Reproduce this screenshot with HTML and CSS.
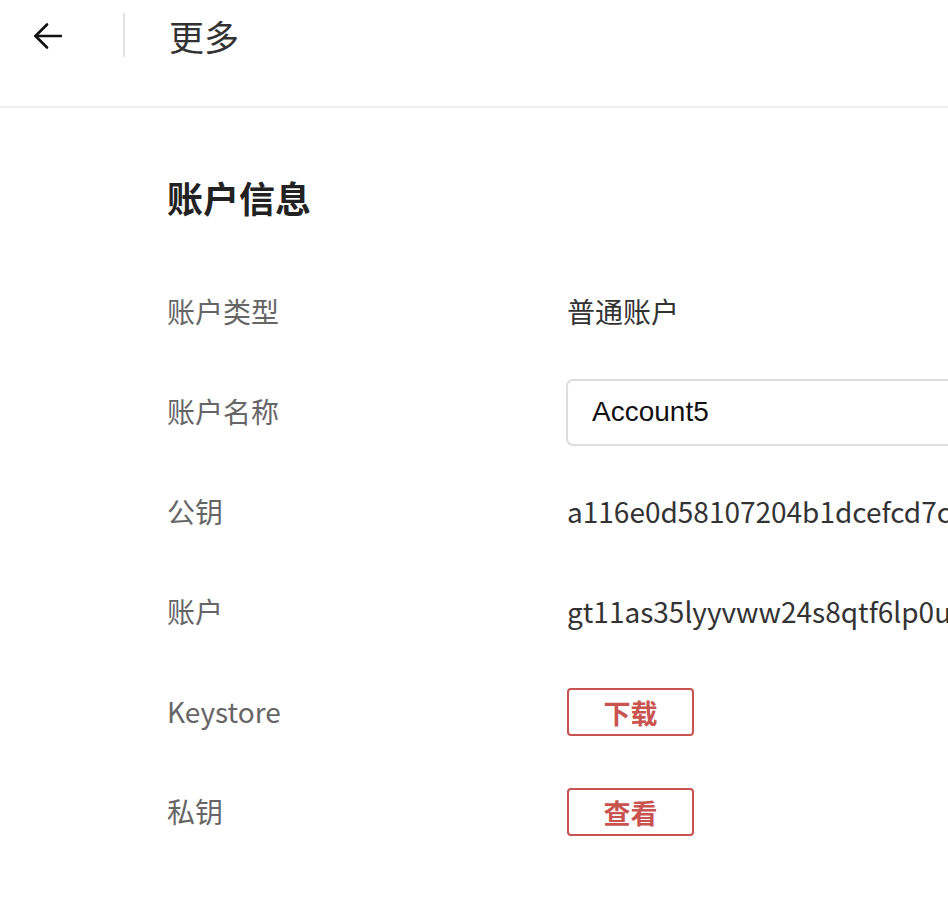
FILE: index.html
```html
<!DOCTYPE html>
<html lang="zh-CN">
<head>
<meta charset="utf-8">
<title>更多</title>
<link rel="stylesheet" href="styles.css">
</head>
<body>
<header class="topbar">
  <div class="topbar-row">
    <button class="back" aria-label="返回">
      <svg width="28" height="26" viewBox="0 0 28 26" fill="none" stroke="#111" stroke-width="2.6" stroke-linecap="round" stroke-linejoin="round">
        <path d="M1.5 13H27"/>
        <path d="M13 1.5L1.5 13L13 24.5"/>
      </svg>
    </button>
    <span class="divider"></span>
    <h1 class="page-title">更多</h1>
  </div>
</header>
<main class="content">
  <h2 class="section-title">账户信息</h2>
  <div class="rows">
    <div class="row">
      <div class="label">账户类型</div>
      <div class="value">普通账户</div>
    </div>
    <div class="row">
      <div class="label">账户名称</div>
      <div class="value"><input class="name-input" type="text" value="Account5"></div>
    </div>
    <div class="row">
      <div class="label">公钥</div>
      <div class="value mono">a116e0d58107204b1dcefcd7c0a3f5e8b2d4c6a1f9e7d3b5c8a2e4f6d0b1c3</div>
    </div>
    <div class="row">
      <div class="label">账户</div>
      <div class="value mono">gt11as35lyyvww24s8qtf6lp0ulx9k3m2n</div>
    </div>
    <div class="row">
      <div class="label">Keystore</div>
      <div class="value"><button class="btn-outline">下载</button></div>
    </div>
    <div class="row">
      <div class="label">私钥</div>
      <div class="value"><button class="btn-outline">查看</button></div>
    </div>
  </div>
</main>
</body>
</html>
```

FILE: styles.css
```css
html, body {
  margin: 0;
  padding: 0;
  background: #fff;
  overflow: hidden;
}
body {
  width: 948px;
  height: 908px;
  font-family: "Noto Sans CJK SC", "Noto Sans", sans-serif;
  color: #333;
}
.topbar {
  height: 106px;
  border-bottom: 2px solid #eeeeee;
  box-sizing: content-box;
}
.topbar-row {
  height: 70px;
  display: flex;
  align-items: center;
  padding-left: 34px;
}
.back {
  border: 0;
  background: none;
  padding: 0;
  width: 28px;
  height: 26px;
  display: flex;
  margin-top: 1px;
}
.divider {
  width: 2px;
  height: 44px;
  background: #e2e2e2;
  margin-left: 61px;
}
.page-title {
  margin: 0 0 0 44px;
  font-size: 35px;
  font-weight: 400;
  color: #333;
  line-height: 1;
}
.content {
  padding-left: 167px;
}
.section-title {
  margin: 0;
  padding-top: 69px;
  height: 85px;
  box-sizing: content-box;
  font-size: 36px;
  font-weight: 700;
  color: #222;
  line-height: 40px;
}
.rows {
  display: flex;
  flex-direction: column;
}
.row {
  height: 100px;
  display: flex;
  align-items: center;
}
.label {
  width: 400px;
  flex: none;
  font-size: 28px;
  color: #666;
  margin-top: -3px;
}
.value {
  font-size: 28px;
  color: #333;
  white-space: nowrap;
  margin-top: -3px;
}
.name-input {
  width: 600px;
  height: 67px;
  box-sizing: border-box;
  margin-left: -1px;
  margin-top: 3px;
  border: 2px solid #dddddd;
  border-radius: 7px;
  padding: 0 0 0 24px;
  font-family: "Liberation Sans", Arial, sans-serif;
  font-size: 28px;
  color: #111;
  outline: none;
}
.btn-outline {
  width: 127px;
  height: 48px;
  box-sizing: border-box;
  margin-top: 3px;
  border: 2px solid #c8534f;
  border-radius: 4px;
  background: #fff;
  color: #c8534f;
  font-family: "Noto Sans CJK SC", sans-serif;
  font-size: 27px;
  font-weight: 700;
  padding: 0;
  line-height: 1;
}
```
